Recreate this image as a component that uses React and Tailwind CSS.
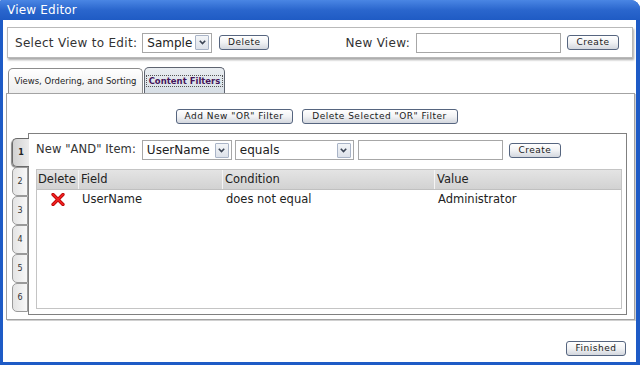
import React from 'react';

function Btn({ children, className = '' }) {
  return (
    <button
      type="button"
      className={`h-[15px] px-[4px] rounded-[3px] border border-[#56657f] bg-gradient-to-b from-white via-[#f1f2f4] to-[#d3d7de] text-[9px] leading-none tracking-[0.5px] whitespace-nowrap text-[#1a1a1a] flex items-center justify-center ${className}`}
    >
      {children}
    </button>
  );
}

function Chevron() {
  return (
    <span className="w-[14px] h-[15px] border border-[#a9b4c7] bg-gradient-to-b from-[#f3f5f8] to-[#dde2ea] rounded-[1px] flex items-center justify-center">
      <svg width="7" height="5" viewBox="0 0 7 5">
        <path d="M0.8 0.8 L3.5 3.6 L6.2 0.8" fill="none" stroke="#3b4454" strokeWidth="1.6" />
      </svg>
    </span>
  );
}

function Select({ value, className = '' }) {
  return (
    <div className={`h-[20px] border border-[#a7a7a7] bg-white flex items-center pl-[4px] pr-[2px] ${className}`}>
      <span className="flex-1 text-[12px] text-[#222] leading-none">{value}</span>
      <Chevron />
    </div>
  );
}

function DeleteX() {
  return (
    <svg width="14" height="13" viewBox="0 0 14 13">
      <path d="M2 1.5 L12 11.5" stroke="#b00000" strokeWidth="3.2" strokeLinecap="round" />
      <path d="M12 1.5 L2 11.5" stroke="#b00000" strokeWidth="3.2" strokeLinecap="round" />
      <path d="M2 1.5 L12 11.5" stroke="#ee2020" strokeWidth="1.8" strokeLinecap="round" />
      <path d="M12 1.5 L2 11.5" stroke="#ee2020" strokeWidth="1.8" strokeLinecap="round" />
    </svg>
  );
}

export default function App() {
  const sideTabs = ['1', '2', '3', '4', '5', '6'];

  return (
    <div className="w-[640px] h-[365px] bg-[#1e5bc6] rounded-tr-[9px] rounded-tl-[2px] flex flex-col overflow-hidden font-['DejaVu_Sans',Verdana,sans-serif] text-[#222]">
      {/* title bar */}
      <div className="h-[20px] shrink-0 flex items-center px-[7px] text-white text-[12px] tracking-[0.2px] bg-gradient-to-b from-[#4a86e4] via-[#2a66cd] to-[#1f5bc4]">
        View Editor
      </div>

      <div className="flex-1 ml-[3px] mr-[4px] mb-[3px] bg-white flex flex-col">
        {/* view selector box */}
        <div className="mt-[7px] ml-[4px] mr-[3px] h-[31px] border border-[#b9b9b9] shadow-[1px_2px_2px_#a9a9a9] flex items-center pl-[7px] pr-[13px]">
          <span className="text-[12px] tracking-[0.3px] text-[#333]">Select View to Edit:</span>
          <Select value="Sample" className="ml-[5px] w-[70px]" />
          <Btn className="ml-[7px] w-[50px]">Delete</Btn>
          <span className="ml-auto text-[12px] tracking-[0.3px] text-[#333]">New View:</span>
          <div className="ml-[6px] w-[145px] h-[20px] border border-[#a7a7a7] bg-white" />
          <Btn className="ml-[6px] w-[52px]">Create</Btn>
        </div>

        {/* top tabs */}
        <div className="mt-[9px] ml-[5px] flex items-end h-[26px]">
          <div className="h-[25px] w-[135px] border border-b-0 border-[#8d8d8d] rounded-t-[5px] bg-gradient-to-b from-white to-[#eeeeee] flex items-center justify-center text-[8.5px] text-[#222]">
            Views, Ordering, and Sorting
          </div>
          <div className="ml-[1px] h-[26px] w-[81px] border border-b-0 border-[#5e6470] rounded-t-[5px] bg-gradient-to-b from-[#e9edf1] to-[#d7dee5] flex items-center justify-center">
            <span className="px-[2px] border border-dotted border-[#555] text-[8.5px] font-bold text-[#44145a] leading-[10px]">
              Content Filters
            </span>
          </div>
        </div>

        {/* panel */}
        <div className="ml-[3px] mr-[1px] h-[227px] border border-[#a3a3a3] shadow-[1px_1px_0_#d0d0d0] flex flex-col">
          <div className="mt-[15px] flex justify-center gap-[9px] pr-[8px]">
            <Btn className="w-[117px]">Add New "OR" Filter</Btn>
            <Btn className="w-[156px]">Delete Selected "OR" Filter</Btn>
          </div>

          <div className="mt-[9px] flex flex-1 mb-[4px] mr-[7px]">
            {/* side tabs */}
            <div className="ml-[5px] mt-[5px] flex flex-col w-[16px] relative z-10">
              {sideTabs.map((t, i) => (
                <div
                  key={t}
                  className={
                    i === 0
                      ? 'h-[29px] -mr-[1px] border border-r-0 border-[#6a6a6a] rounded-l-[5px] bg-gradient-to-r from-[#d2d2d2] to-[#ececec] shadow-[-1px_1px_1px_#888] flex items-center justify-center text-[8px] font-bold text-[#222]'
                      : 'h-[29px] border border-[#9a9a9a] rounded-l-[5px] bg-gradient-to-r from-[#e4e4e4] to-[#f8f8f8] flex items-center justify-center text-[8px] text-[#333]'
                  }
                >
                  {t}
                </div>
              ))}
            </div>

            {/* inner panel */}
            <div className="flex-1 border border-[#808080] flex flex-col pl-[7px] pr-[4px]">
              <div className="mt-[6px] flex items-center h-[20px]">
                <span className="text-[11.5px] tracking-[0.1px] text-[#333]">New "AND" Item:</span>
                <Select value="UserName" className="ml-[6px] w-[90px]" />
                <Select value="equals" className="ml-[3px] w-[119px]" />
                <div className="ml-[4px] w-[145px] h-[20px] border border-[#a7a7a7] bg-white" />
                <Btn className="ml-[6px] w-[52px]">Create</Btn>
              </div>

              <div className="mt-[9px] mb-[5px] flex-1 border border-[#c4c4c4] flex flex-col">
                <div className="h-[20px] flex bg-gradient-to-b from-[#e4e4e4] to-[#d2d2d2] border-b border-[#c0c0c0] text-[11.5px] text-[#222]">
                  <div className="w-[42px] flex items-center pl-[1px] border-r border-[#f4f4f4]">Delete</div>
                  <div className="w-[144px] flex items-center pl-[2px] border-r border-[#f4f4f4]">Field</div>
                  <div className="w-[212px] flex items-center pl-[2px] border-r border-[#f4f4f4]">Condition</div>
                  <div className="flex-1 flex items-center pl-[2px]">Value</div>
                </div>
                <div className="h-[19px] flex text-[11.5px] text-[#222]">
                  <div className="w-[42px] flex items-center justify-center">
                    <DeleteX />
                  </div>
                  <div className="w-[144px] flex items-center pl-[3px]">UserName</div>
                  <div className="w-[212px] flex items-center pl-[3px]">does not equal</div>
                  <div className="flex-1 flex items-center pl-[3px]">Administrator</div>
                </div>
              </div>
            </div>
          </div>
        </div>

        {/* footer */}
        <div className="flex-1 flex items-end justify-end pr-[10px] pb-[6px]">
          <Btn className="w-[60px] h-[14px]">Finished</Btn>
        </div>
      </div>
    </div>
  );
}
